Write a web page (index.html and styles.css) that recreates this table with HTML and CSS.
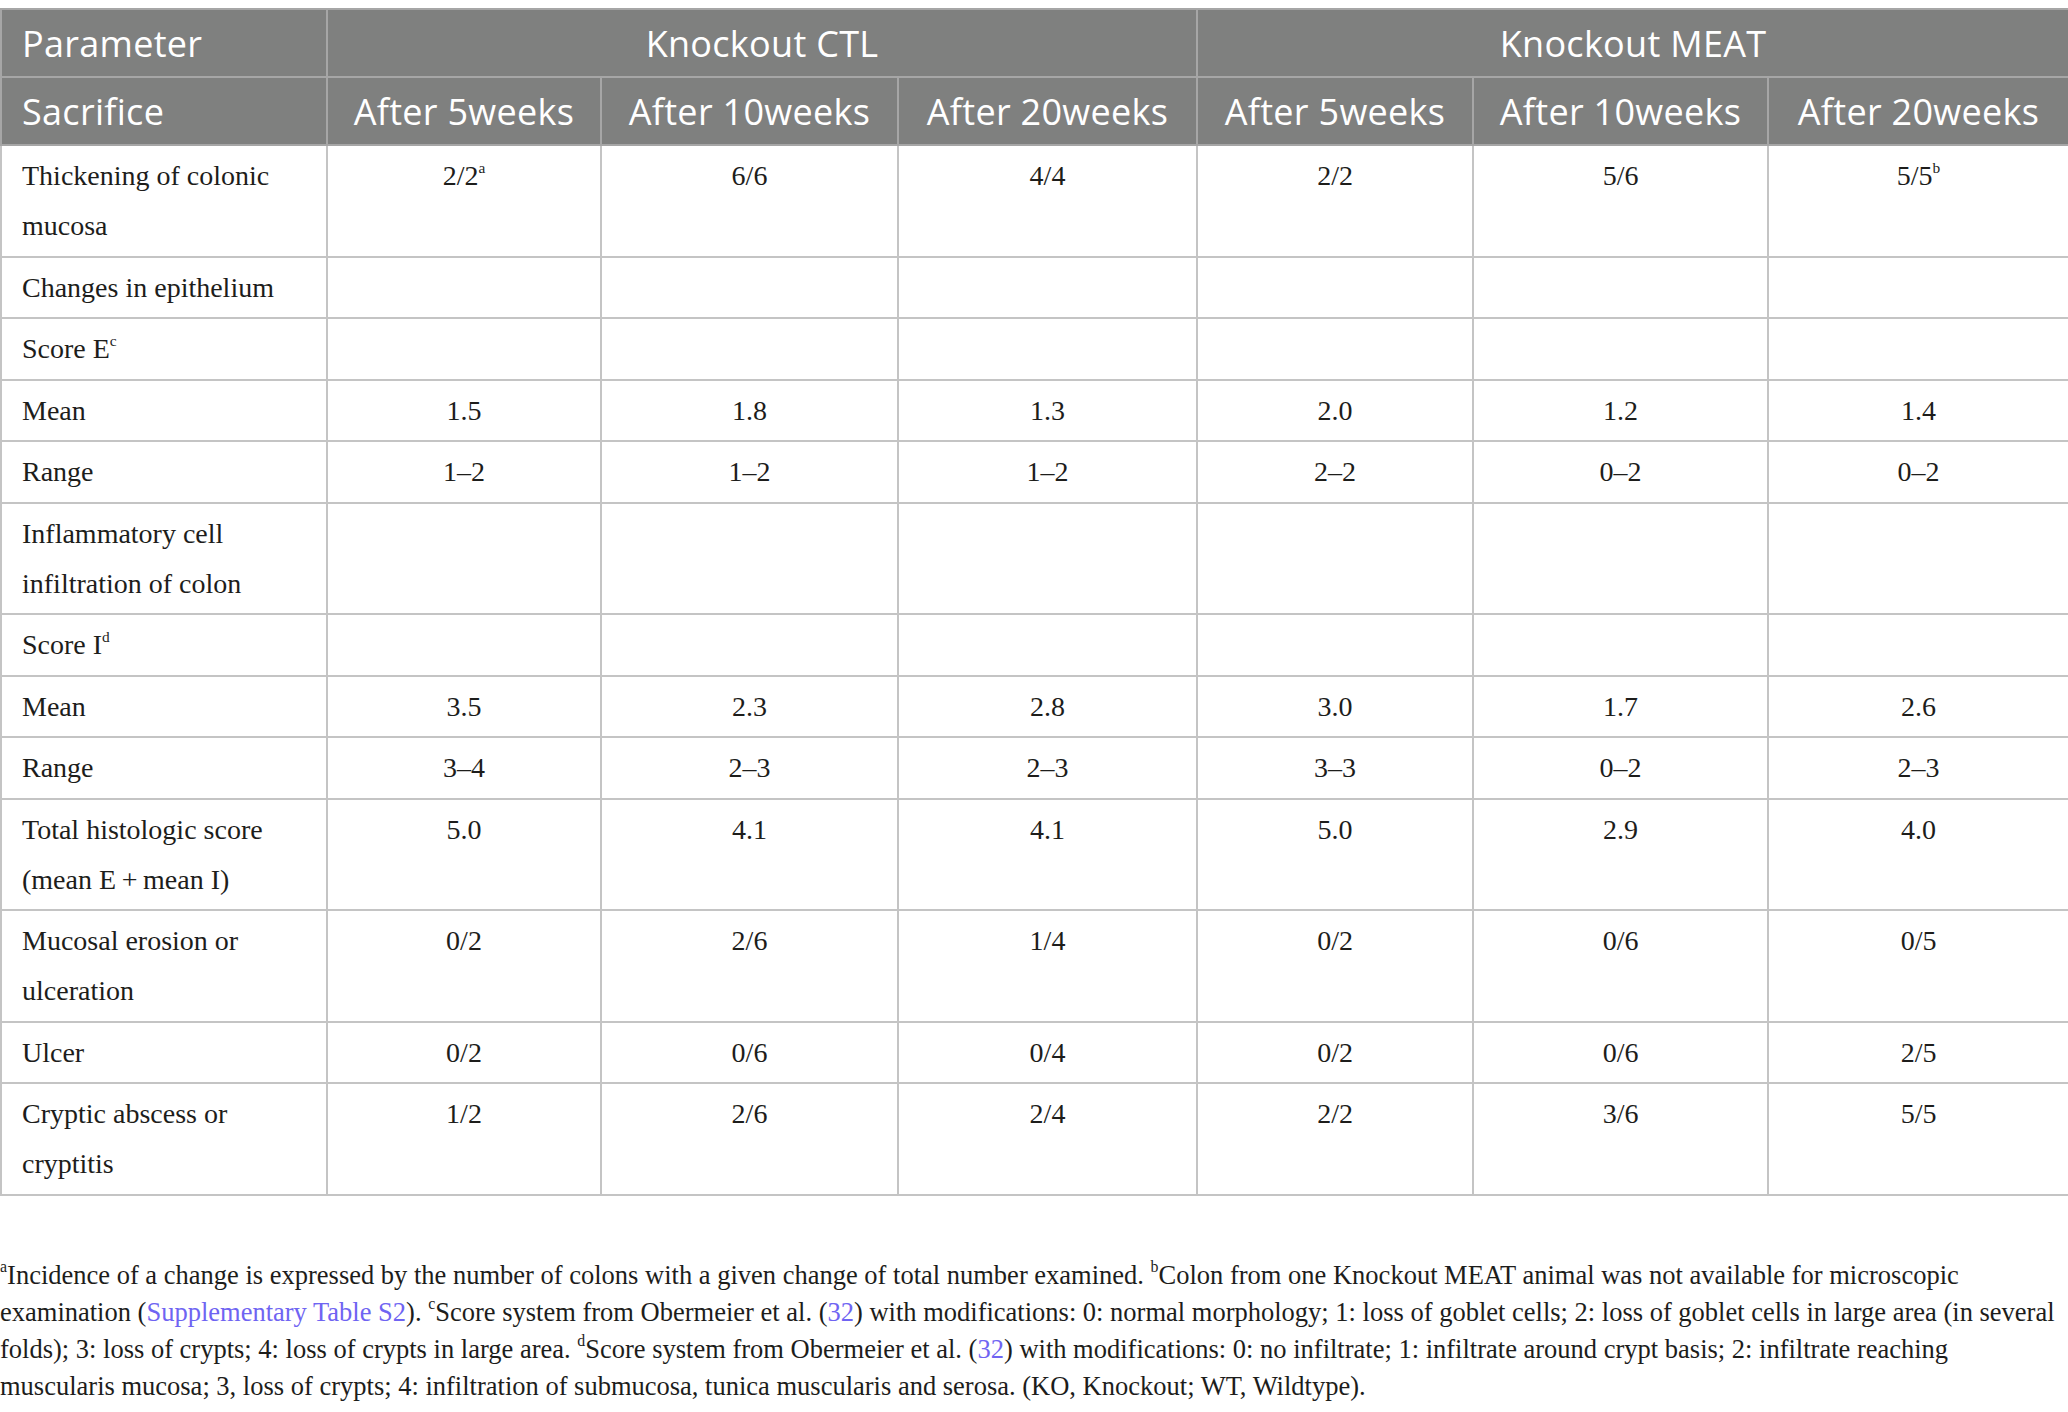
FILE: index.html
```html
<!DOCTYPE html>
<html lang="en">
  <head>
    <meta charset="UTF-8" />
    <title>Histologic findings</title>
    <link rel="stylesheet" href="styles.css">
  </head>
  <body>
    <table class="data-table">
      <colgroup>
        <col class="col-param" />
        <col class="col-a" />
        <col class="col-b" />
        <col class="col-c" />
        <col class="col-d" />
        <col class="col-e" />
        <col class="col-f" />
      </colgroup>
      <thead>
        <tr>
          <th class="left">Parameter</th>
          <th colspan="3">Knockout CTL</th>
          <th colspan="3">Knockout MEAT</th>
        </tr>
        <tr>
          <th class="left">Sacrifice</th>
          <th>After 5weeks</th>
          <th>After 10weeks</th>
          <th>After 20weeks</th>
          <th>After 5weeks</th>
          <th>After 10weeks</th>
          <th>After 20weeks</th>
        </tr>
      </thead>
      <tbody>
        <tr>
          <td>Thickening of colonic mucosa</td>
          <td>2/2<sup>a</sup></td><td>6/6</td><td>4/4</td>
          <td>2/2</td><td>5/6</td><td>5/5<sup>b</sup></td>
        </tr>
        <tr>
          <td>Changes in epithelium</td>
          <td></td><td></td><td></td><td></td><td></td><td></td>
        </tr>
        <tr>
          <td>Score E<sup>c</sup></td>
          <td></td><td></td><td></td><td></td><td></td><td></td>
        </tr>
        <tr>
          <td>Mean</td>
          <td>1.5</td><td>1.8</td><td>1.3</td>
          <td>2.0</td><td>1.2</td><td>1.4</td>
        </tr>
        <tr>
          <td>Range</td>
          <td>1–2</td><td>1–2</td><td>1–2</td>
          <td>2–2</td><td>0–2</td><td>0–2</td>
        </tr>
        <tr>
          <td>Inflammatory cell infiltration of colon</td>
          <td></td><td></td><td></td><td></td><td></td><td></td>
        </tr>
        <tr>
          <td>Score I<sup>d</sup></td>
          <td></td><td></td><td></td><td></td><td></td><td></td>
        </tr>
        <tr>
          <td>Mean</td>
          <td>3.5</td><td>2.3</td><td>2.8</td>
          <td>3.0</td><td>1.7</td><td>2.6</td>
        </tr>
        <tr>
          <td>Range</td>
          <td>3–4</td><td>2–3</td><td>2–3</td>
          <td>3–3</td><td>0–2</td><td>2–3</td>
        </tr>
        <tr>
          <td>Total histologic score (mean E&#8201;+&#8201;mean I)</td>
          <td>5.0</td><td>4.1</td><td>4.1</td>
          <td>5.0</td><td>2.9</td><td>4.0</td>
        </tr>
        <tr>
          <td>Mucosal erosion or ulceration</td>
          <td>0/2</td><td>2/6</td><td>1/4</td>
          <td>0/2</td><td>0/6</td><td>0/5</td>
        </tr>
        <tr>
          <td>Ulcer</td>
          <td>0/2</td><td>0/6</td><td>0/4</td>
          <td>0/2</td><td>0/6</td><td>2/5</td>
        </tr>
        <tr>
          <td>Cryptic abscess or cryptitis</td>
          <td>1/2</td><td>2/6</td><td>2/4</td>
          <td>2/2</td><td>3/6</td><td>5/5</td>
        </tr>
      </tbody>
    </table>

    <p class="footnote">
      <sup>a</sup>Incidence of a change is expressed by the number of colons with a given change of total number examined. <sup>b</sup>Colon from one Knockout MEAT animal was not available for microscopic<br>
      examination (<a href="#">Supplementary Table S2</a>). <sup>c</sup>Score system from Obermeier et al. (<a href="#">32</a>) with modifications: 0: normal morphology; 1: loss of goblet cells; 2: loss of goblet cells in large area (in several<br>
      folds); 3: loss of crypts; 4: loss of crypts in large area. <sup>d</sup>Score system from Obermeier et al. (<a href="#">32</a>) with modifications: 0: no infiltrate; 1: infiltrate around crypt basis; 2: infiltrate reaching<br>
      muscularis mucosa; 3, loss of crypts; 4: infiltration of submucosa, tunica muscularis and serosa. (KO, Knockout; WT, Wildtype).
    </p>
  </body>
</html>
```

FILE: styles.css
```css
:root {
  --head-bg: #7f807f;
  --head-line: #a6a6a6;
  --grid-line: #c4c4c4;
  --text: #1d1d1b;
  --link: #6f64f2;
}
* {
  box-sizing: border-box;
}
body {
  margin: 0;
  padding-top: 8px;
  background: #fff;
  color: var(--text);
  font-family: "Liberation Serif", "Times New Roman", serif;
}
.data-table {
  width: 2068px;
  table-layout: fixed;
  border-collapse: collapse;
  border: 2px solid var(--grid-line);
}
.col-param { width: 326px; }
.col-a { width: 274px; }
.col-b { width: 297px; }
.col-c { width: 299px; }
.col-d { width: 276px; }
.col-e { width: 295px; }
.col-f { width: 301px; }

.data-table th {
  background: var(--head-bg);
  color: #fff;
  font-family: "Open Sans", "Noto Sans", sans-serif;
  font-weight: 400;
  font-size: 36px;
  letter-spacing: 0.3px;
  height: 68px;
  padding: 0 20px;
  text-align: center;
  border: 2px solid var(--head-line);
  white-space: nowrap;
}
.data-table th.left {
  text-align: left;
}
.data-table td {
  font-size: 28px;
  line-height: 50px;
  padding: 5px 20px 4.5px;
  vertical-align: top;
  text-align: center;
  border: 2px solid var(--grid-line);
}
.data-table td:first-child {
  text-align: left;
}
sup {
  font-size: 0.55em;
  line-height: 0;
  vertical-align: 0.75em;
}
.footnote {
  margin: 61px 0 0;
  font-size: 26.5px;
  line-height: 37px;
  white-space: nowrap;
}
.footnote sup {
  font-size: 0.6em;
}
.footnote a {
  color: var(--link);
  text-decoration: none;
}
```
